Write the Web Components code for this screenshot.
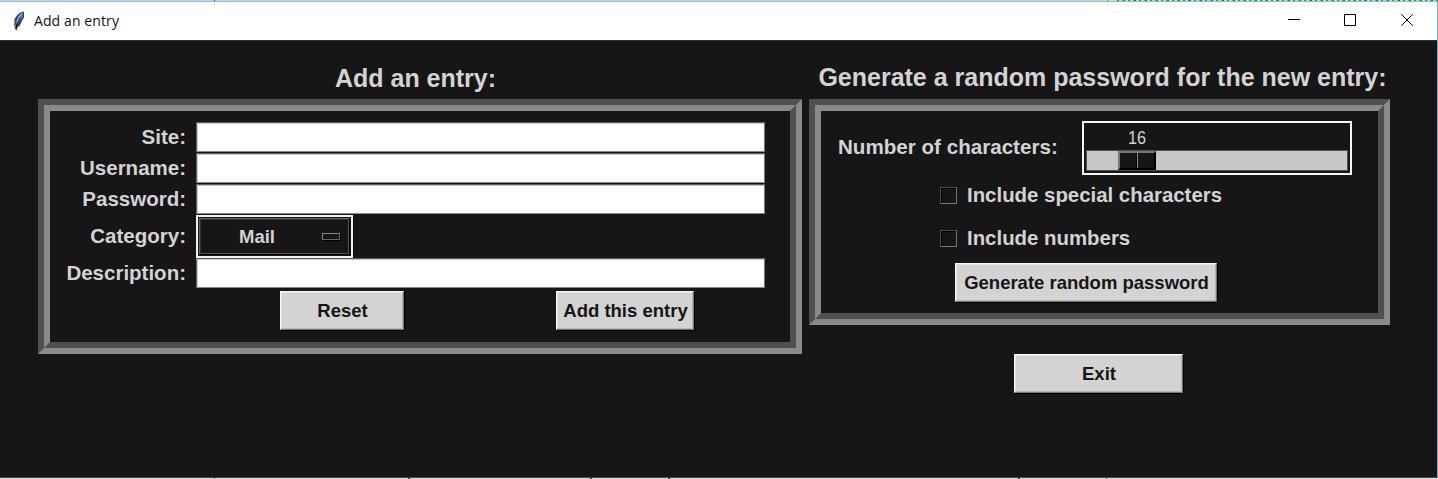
<!DOCTYPE html>
<html lang="en">
<head>
<meta charset="utf-8">
<title>Add an entry</title>
<style>
html,body{margin:0;height:479px;overflow:hidden;background:#161616}
body{font-family:"Liberation Sans",Arial,sans-serif;color:#d3d3d3}
</style>
</head>
<body>
<tk-window heading="Add an entry">
  <tk-section class="left" style="width:764px;--head-shift:-9px;--head-line:36px;--h:255px" heading="Add an entry:">
    <entry-form></entry-form>
  </tk-section>
  <div style="width:581px">
    <tk-section style="--h:226px;--head-shift:6px;--head-line:35px" heading="Generate a random password for the new entry:">
      <password-form></password-form>
    </tk-section>
    <div style="display:flex;padding:29px 0 0 205px"><tk-button style="width:169px;height:39px">Exit</tk-button></div>
  </div>
</tk-window>
<script>
function define(name, html) {
  const t = document.createElement('template');
  t.innerHTML = html;
  customElements.define(name, class extends HTMLElement {
    constructor() {
      super();
      this.attachShadow({mode: 'open'}).appendChild(t.content.cloneNode(true));
    }
    connectedCallback() {
      const h = this.shadowRoot.querySelector('[data-heading]');
      if (h) h.textContent = this.getAttribute('heading');
    }
  });
}

define('tk-titlebar', `<style>
:host{display:flex;height:38px;background:#fff;color:#111;align-items:center;font:14px/20px "Open Sans","Noto Sans",sans-serif}
.icon{margin:0 7px 0 11px;flex:none}
.title{flex:1;white-space:nowrap;letter-spacing:.1px}
.controls{flex:none}
</style>
<svg class="icon" width="16" height="20" viewBox="0 0 16 20">
<path d="M13 .5C9.300.8 5 4.500 3.500 8.600c-.8 2.700-.8 5.700.3 8.100l1.500 2.800.6-2.600c2.800-2 4.400-4.600 5-7L13 6.200Z" fill="#333d49"/>
<path d="M12.200 1.300C8.600 2.600 5.600 6.500 5 12.500l1.500.5 3-3.500 2-3.500Z" fill="#4f8ad6"/>
<path d="M11 2.300C8.300 4.800 6.600 7.500 6.100 10.500" stroke="#8ab4e8" fill="none"/>
<path d="M9.500 6.500C8.500 9 7.300 11 6.300 13M5.800 13 5.200 19" stroke="#17191c" stroke-width="1" fill="none"/>
<path d="M3.700 9v4l1 3" stroke="#9a9a9a" fill="none"/>
</svg>
<span class="title" data-heading></span>
<svg class="controls" width="149" height="38" viewBox="0 0 149 38" fill="none" stroke="#000">
<path d="M0 17.500h12M56.500 12.500h11v11h-11ZM113.300 12.300l11.400 11.400M124.700 12.300l-11.400 11.400"/></svg>`);

define('tk-window', `<style>
:host{display:block;width:1438px;height:479px;box-sizing:border-box;background:#161616}
.behind{height:1px;display:flex;background:linear-gradient(90deg,transparent 214px,#555 214px 215px,transparent 215px 1107px,#777 1107px 1108px,transparent 1108px),#d4d6d4}
.behind i{margin-left:1117px;flex:1;background:repeating-linear-gradient(90deg,#3c9a35 0 2px,#d4d6b8 2px 5px,#a0a03c 5px 6px,#1c8a28 6px 8px,#dadada 8px 11px)}
.frame{height:477px;box-sizing:border-box;border-top:1px solid #7cc3dd;border-right:1px solid #62b2d4;border-bottom:1px solid #484848;display:flex;flex-direction:column}
.client{flex:1;border-top:1px solid #303030;background:#161616;display:flex;gap:7px;align-items:flex-start;padding:19px 0 0 38px}
.below{height:1px;background:linear-gradient(90deg,transparent 214px,#555 214px 215px,transparent 215px 408px,#222 408px 410px,transparent 410px 590px,#222 590px 592px,transparent 592px 668px,#222 668px 670px,transparent 670px 1018px,#222 1018px 1020px,transparent 1020px 1106px,#333 1106px 1107px,transparent 1107px),#ddd}
</style>
<div class="behind"><i></i></div>
<div class="frame"><tk-titlebar heading="Add an entry"></tk-titlebar><div class="client"><slot></slot></div></div>
<div class="below"></div>`);

define('tk-section', `<style>
:host{display:block}
.head{height:39px;box-sizing:border-box;text-align:center;font:bold 25px "Liberation Sans",Arial,sans-serif;line-height:var(--head-line);white-space:nowrap}
.head span{margin-left:var(--head-shift,0px)}
.a{height:var(--h);box-sizing:border-box;border:6px solid;border-color:#505050 #8a8a8a #8a8a8a #505050}
.b{height:100%;box-sizing:border-box;border:6px solid;border-color:#8a8a8a #505050 #505050 #8a8a8a}
</style>
<div class="head"><span data-heading></span></div>
<div class="a"><div class="b"><slot></slot></div></div>`);

define('tk-button', `<style>
:host{display:flex;box-sizing:border-box;align-items:center;justify-content:center;background:#d3d3d3;color:#161616;border:1px solid;border-color:#f8f8f8 #777 #777 #f8f8f8;box-shadow:1px 1px 0 #000,inset -1px -1px #b4b4b4,inset 1px 1px #e4e4e4;font:bold 18.5px/22px "Liberation Sans",Arial,sans-serif;white-space:nowrap}
span{padding:1px 0 0 1px}
</style><span><slot></slot></span>`);

define('tk-entry', `<style>
:host{display:block;box-sizing:border-box;background:#fff;border:1px solid;border-color:#5c5c5c #777 #888 #666;box-shadow:inset 1px 1px 0 #c8c8c8}
</style>`);

define('tk-option', `<style>
:host{display:flex;box-sizing:border-box;width:157px;height:43px;border:2px solid #f2f2f2;padding:1px}
.box{flex:1;border:1px solid;border-color:#666 #000 #000 #666;box-shadow:inset 1px 1px #333,inset -1px -1px #555;display:flex;align-items:center;padding:0 9px 0 39px;justify-content:space-between;font:bold 18.5px/22px "Liberation Sans",Arial,sans-serif}
i{box-sizing:border-box;width:18px;height:7px;border:1px solid;border-color:#888 #666 #666 #888;box-shadow:1px 1px #000}
</style><div class="box"><slot></slot><i></i></div>`);

define('tk-check', `<style>
:host{display:flex;align-items:center;gap:10px;height:24px;font:bold 20.4px/24px "Liberation Sans",Arial,sans-serif;white-space:nowrap}
i{box-sizing:border-box;width:17px;height:17px;border:1px solid;border-color:#4a4a4a #777 #777 #4a4a4a;box-shadow:inset 1px 1px #000}
</style><i></i><slot></slot>`);

define('tk-scale', `<style>
:host{display:flex;flex-direction:column;box-sizing:border-box;width:270px;height:54px;border:2px solid #f6f6f6;padding:0 2px 2px}
.val{height:27px;padding-left:42px;font:18px/31px "Liberation Sans",Arial,sans-serif}
.val span{display:inline-block;transform:scaleX(.9);transform-origin:0 0}
.trough{height:21px;box-sizing:border-box;border:1px solid #505050;background:#c8c8c8;display:flex;padding-left:31px}
.thumb{width:38px;height:19px;box-sizing:border-box;background:#161616;border:2px solid;border-color:#777 #000 #000 #777;display:flex}
.thumb i{flex:1;border-right:1px solid #000}
.thumb i+i{border-left:1px solid #888;border-right:0}
</style><div class="val"><span><slot></slot></span></div><div class="trough"><div class="thumb"><i></i><i></i></div></div>`);

define('entry-form', `<style>
:host{display:block;padding:11px 0 0}
.grid{display:grid;grid-template-columns:136px 569px;column-gap:10px;grid-template-rows:30px 30px 30px 42px 30px;row-gap:1px}
label{text-align:right;font:bold 20.5px/28px "Liberation Sans",Arial,sans-serif;align-self:center;white-space:nowrap}
.buttons{display:flex;gap:152px;padding:3px 0 0 230px}
</style>
<div class="grid">
<label>Site:</label><tk-entry></tk-entry>
<label>Username:</label><tk-entry></tk-entry>
<label>Password:</label><tk-entry></tk-entry>
<label>Category:</label><tk-option>Mail</tk-option>
<label>Description:</label><tk-entry></tk-entry>
</div>
<div class="buttons"><tk-button style="width:124px;height:39px">Reset</tk-button><tk-button style="width:138px;height:39px">Add this entry</tk-button></div>`);

define('password-form', `<style>
:host{display:block;padding:10px 0 0 17px}
.row{display:flex;justify-content:space-between;align-items:center;width:514px;font:bold 20.6px/24px "Liberation Sans",Arial,sans-serif;white-space:nowrap}
.row span{padding-bottom:2px}
.checks{display:flex;flex-direction:column;gap:19px;padding:8px 0 13px 102px}
</style>
<div class="row"><span>Number of characters:</span><tk-scale>16</tk-scale></div>
<div class="checks"><tk-check>Include special characters</tk-check><tk-check>Include numbers</tk-check></div>
<div style="display:flex;padding-left:117px"><tk-button style="width:262px;height:39px">Generate random password</tk-button></div>`);
</script>
</body>
</html>
